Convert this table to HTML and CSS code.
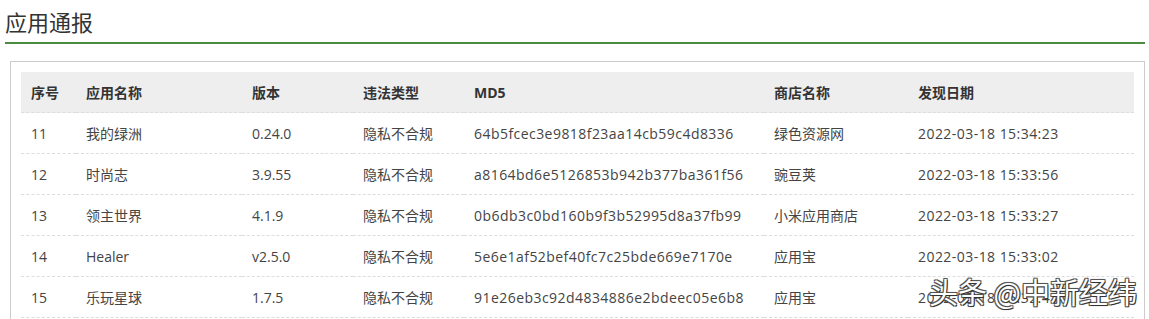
FILE: index.html
```html
<!DOCTYPE html>
<html lang="zh-CN">
<head>
<meta charset="utf-8">
<title>应用通报</title>
<link rel="stylesheet" href="styles.css">
</head>
<body>
<h2 class="title">应用通报</h2>
<div class="panel">
  <table class="report">
    <colgroup>
      <col class="c-no"><col class="c-name"><col class="c-ver"><col class="c-type"><col class="c-md5"><col class="c-store"><col class="c-date">
    </colgroup>
    <thead>
      <tr><th>序号</th><th>应用名称</th><th>版本</th><th>违法类型</th><th>MD5</th><th>商店名称</th><th>发现日期</th></tr>
    </thead>
    <tbody>
      <tr><td>11</td><td>我的绿洲</td><td>0.24.0</td><td>隐私不合规</td><td class="wide">64b5fcec3e9818f23aa14cb59c4d8336</td><td>绿色资源网</td><td class="wide">2022-03-18 15:34:23</td></tr>
      <tr><td>12</td><td>时尚志</td><td>3.9.55</td><td>隐私不合规</td><td class="wide">a8164bd6e5126853b942b377ba361f56</td><td>豌豆荚</td><td class="wide">2022-03-18 15:33:56</td></tr>
      <tr><td>13</td><td>领主世界</td><td>4.1.9</td><td>隐私不合规</td><td class="wide">0b6db3c0bd160b9f3b52995d8a37fb99</td><td>小米应用商店</td><td class="wide">2022-03-18 15:33:27</td></tr>
      <tr><td>14</td><td>Healer</td><td>v2.5.0</td><td>隐私不合规</td><td class="wide">5e6e1af52bef40fc7c25bde669e7170e</td><td>应用宝</td><td class="wide">2022-03-18 15:33:02</td></tr>
      <tr><td>15</td><td>乐玩星球</td><td>1.7.5</td><td>隐私不合规</td><td class="wide">91e26eb3c92d4834886e2bdeec05e6b8</td><td>应用宝</td><td class="wide">2022-03-18 15:32:41</td></tr>
    </tbody>
  </table>
</div>
<div class="watermark">头条 @中新经纬</div>
</body>
</html>
```
FILE: styles.css
```css
html, body {
  margin: 0;
  background: #fff;
}
body {
  padding: 0 4px 0 5px;
  font-family: "Open Sans", "Noto Sans CJK SC", sans-serif;
  color: #333;
  overflow: hidden;
  height: 319px;
}
.title {
  margin: 0;
  padding: 7px 0 0;
  height: 35px;
  font-size: 22px;
  line-height: 30px;
  font-weight: normal;
  color: #333;
  border-bottom: 2px solid #4a8b3f;
}
.panel {
  margin: 17px 0 0 5px;
  border: 1px solid #ccc;
  padding: 10px 10px 0 10px;
  height: 270px;
}
.report {
  width: 100%;
  border-collapse: collapse;
  table-layout: fixed;
  font-size: 14px;
}
.c-no { width: 55px; }
.c-name { width: 166px; }
.c-ver { width: 111px; }
.c-type { width: 111px; }
.c-md5 { width: 300px; }
.c-store { width: 144px; }
.report th,
.report td {
  height: 40px;
  padding: 0 0 0 10px;
  text-align: left;
  vertical-align: middle;
  border-bottom: 1px dashed #ddd;
  white-space: nowrap;
}
.report th {
  background: #eee;
  font-weight: bold;
  color: #333;
}
.report td {
  color: #444;
}
.report td.wide {
  letter-spacing: 0.45px;
}
.watermark {
  position: absolute;
  left: 929px;
  top: 273px;
  font-family: "Noto Sans CJK SC", sans-serif;
  font-size: 29px;
  line-height: 36px;
  color: #fff;
  text-shadow: 1px 1px 0 #333, -1px -1px 0 #555, 1px -1px 0 #555, -1px 1px 0 #555, 0 0 2px #000;
}
```
